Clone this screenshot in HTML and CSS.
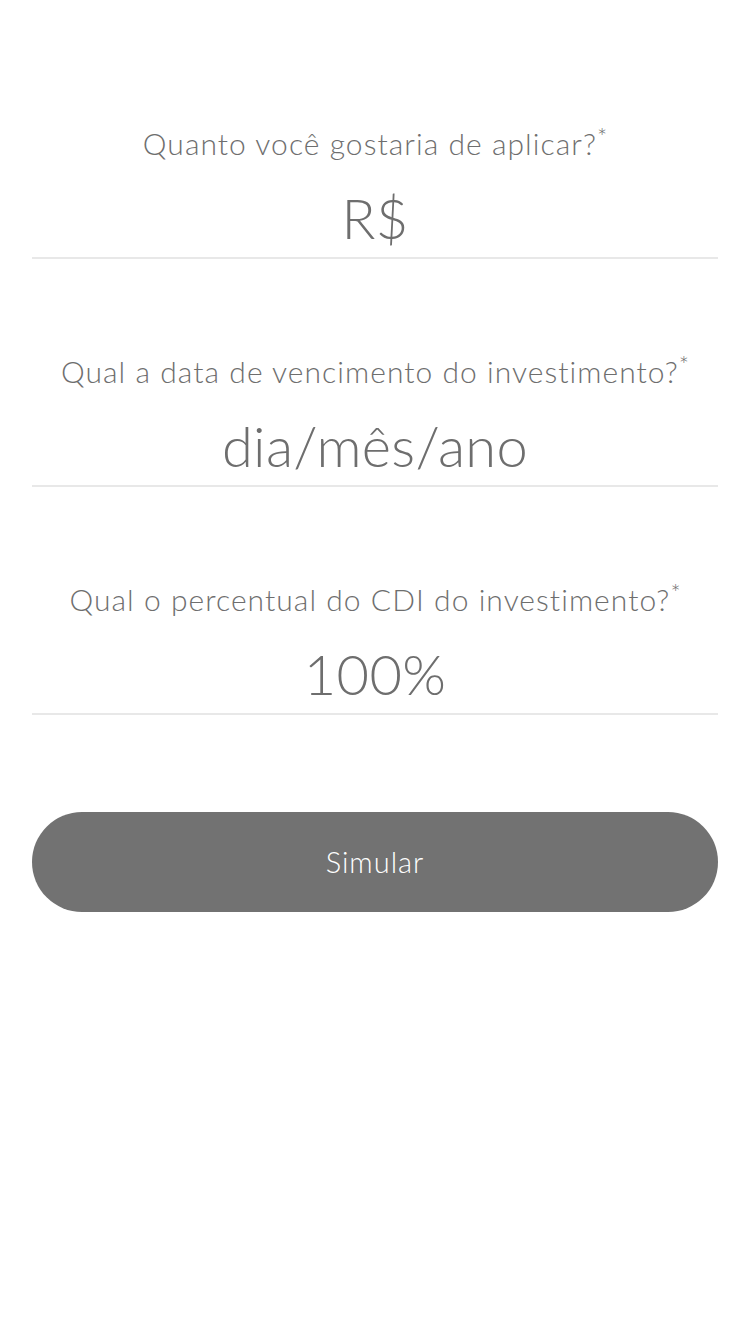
FILE: index.html
```html
<!DOCTYPE html>
<html lang="pt-BR">
<head>
<meta charset="utf-8">
<title>Simulador</title>
<link rel="stylesheet" href="styles.css">
</head>
<body>
<main class="form">
  <div class="field">
    <div class="label">Quanto você gostaria de aplicar?<sup class="req">*</sup></div>
    <div class="value">R$</div>
  </div>
  <div class="field">
    <div class="label">Qual a data de vencimento do investimento?<sup class="req">*</sup></div>
    <div class="value">dia/mês/ano</div>
  </div>
  <div class="field">
    <div class="label">Qual o percentual do CDI do investimento?<sup class="req">*</sup></div>
    <div class="value">100%</div>
  </div>
  <button class="submit">Simular</button>
</main>
</body>
</html>
```

FILE: styles.css
```css
html, body {
  margin: 0;
  padding: 0;
  background: #fff;
}
body {
  font-family: Lato, "Open Sans", "Liberation Sans", sans-serif;
  font-weight: 300;
  color: #6e6e6e;
}
.form {
  display: flex;
  flex-direction: column;
  padding: 123px 32px 0;
}
.field {
  display: flex;
  flex-direction: column;
  align-items: center;
  border-bottom: 2px solid #e8e8e8;
  padding-bottom: 4px;
  margin-bottom: 92px;
}
.field:last-of-type {
  margin-bottom: 97px;
}
.label {
  font-size: 30px;
  line-height: 40px;
  height: 40px;
  letter-spacing: 1.05px;
  margin-bottom: 20px;
}
.req {
  font-size: 24px;
  line-height: 0;
  letter-spacing: 0;
  vertical-align: 9px;
}
.value {
  font-size: 56px;
  line-height: 70px;
  height: 70px;
  letter-spacing: 0.3px;
}
.submit {
  height: 100px;
  border: none;
  border-radius: 50px;
  background: #727272;
  color: #fff;
  font-family: inherit;
  font-weight: 300;
  font-size: 29px;
  letter-spacing: 1px;
  line-height: 96px;
  padding: 0;
}
```
